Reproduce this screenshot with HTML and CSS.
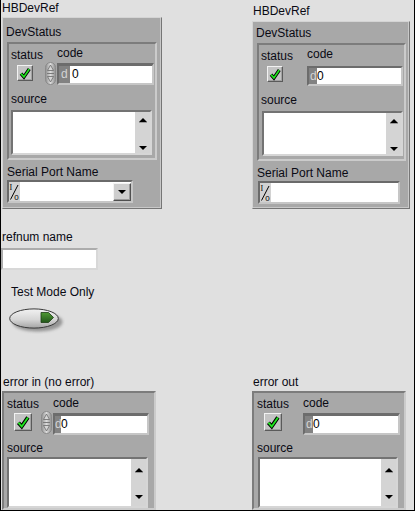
FILE: index.html
```html
<!DOCTYPE html>
<html>
<head>
<meta charset="utf-8">
<title>HBDevRef</title>
<link rel="stylesheet" href="styles.css">
</head>
<body>
<div class="panel">

  <section class="hb hb-l">
    <div class="lbl hb-lbl">HBDevRef</div>
    <div class="outer">
      <div class="lbl ds-lbl">DevStatus</div>
      <div class="errc">
        <div class="err-grid">
          <div class="lbl st-lbl">status</div>
          <div class="lbl code-lbl">code</div>
          <div class="chk chk-s"><svg viewBox="0 0 14 14"><path d="M3 7.6 L5.9 10.9 L11.3 3" fill="none" stroke="#000" stroke-width="3.4"/><path d="M3 7.6 L5.9 10.9 L11.3 3" fill="none" stroke="#1fe61f" stroke-width="1.6"/></svg></div>
          <div class="spin"><svg width="11" height="23" viewBox="0 0 11 23"><defs><linearGradient id="sg1" x1="0" x2="1" y1="0" y2="0"><stop offset="0" stop-color="#8e8e8e"/><stop offset="0.5" stop-color="#dcdcdc"/><stop offset="1" stop-color="#8e8e8e"/></linearGradient></defs><rect x="0.5" y="0.5" width="10" height="22" rx="5" fill="url(#sg1)" stroke="#8a8a8a"/><path d="M5.5 3 L8.5 8.5 L2.5 8.5 Z" fill="#d6d6d6" stroke="#6a6a6a" stroke-width="0.8"/><path d="M2.5 14.5 L8.5 14.5 L5.5 20 Z" fill="#d6d6d6" stroke="#6a6a6a" stroke-width="0.8"/><line x1="2" y1="11.5" x2="9" y2="11.5" stroke="#7a7a7a"/></svg></div>
          <div class="num num-a"><span class="radix">d</span><span class="val">0</span></div>
        </div>
        <div class="lbl src-lbl">source</div>
        <div class="str"><div class="str-txt"></div><div class="sb"><i class="ar-up"></i><i class="ar-dn"></i></div></div>
      </div>
      <div class="lbl sp-lbl">Serial Port Name</div>
      <div class="visa">
        <div class="io"><svg width="11" height="19" viewBox="0 0 11 19"><text x="0.5" y="7.5" font-size="8" font-family="Liberation Serif, serif">I</text><line x1="1.5" y1="17.5" x2="9" y2="3" stroke="#000" stroke-width="1"/><text x="5.2" y="18" font-size="8" font-family="Liberation Sans, sans-serif">0</text></svg></div>
        <div class="visa-field"></div>
        <div class="ddbtn"><i class="ar-dd"></i></div>
      </div>
    </div>
  </section>

  <section class="hb hb-r">
    <div class="lbl hb-lbl">HBDevRef</div>
    <div class="outer">
      <div class="lbl ds-lbl">DevStatus</div>
      <div class="errc">
        <div class="err-grid">
          <div class="lbl st-lbl">status</div>
          <div class="lbl code-lbl">code</div>
          <div class="chk chk-s"><svg viewBox="0 0 14 14"><path d="M3 7.6 L5.9 10.9 L11.3 3" fill="none" stroke="#000" stroke-width="3.4"/><path d="M3 7.6 L5.9 10.9 L11.3 3" fill="none" stroke="#1fe61f" stroke-width="1.6"/></svg></div>
          <div class="num num-b"><span class="radix">d</span><span class="val">0</span></div>
        </div>
        <div class="lbl src-lbl">source</div>
        <div class="str"><div class="str-txt"></div><div class="sb"><i class="ar-up"></i><i class="ar-dn"></i></div></div>
      </div>
      <div class="lbl sp-lbl">Serial Port Name</div>
      <div class="visa">
        <div class="io"><svg width="11" height="19" viewBox="0 0 11 19"><text x="0.5" y="7.5" font-size="8" font-family="Liberation Serif, serif">I</text><line x1="1.5" y1="17.5" x2="9" y2="3" stroke="#000" stroke-width="1"/><text x="5.2" y="18" font-size="8" font-family="Liberation Sans, sans-serif">0</text></svg></div>
        <div class="visa-field"></div>
      </div>
    </div>
  </section>

  <section class="mid">
    <div class="lbl ref-lbl">refnum name</div>
    <div class="refbox"></div>
    <div class="lbl tm-lbl">Test Mode Only</div>
    <div class="tmbtn"><svg width="56" height="27" viewBox="0 0 56 27"><defs><filter id="blur" x="-20%" y="-40%" width="140%" height="180%"><feGaussianBlur stdDeviation="1.4"/></filter><linearGradient id="bg" x1="0" x2="0" y1="0" y2="1"><stop offset="0" stop-color="#f2f2f2"/><stop offset="0.55" stop-color="#d6d6d6"/><stop offset="1" stop-color="#a4a4a4"/></linearGradient><linearGradient id="lg" x1="0" x2="0" y1="0" y2="1"><stop offset="0" stop-color="#4f9a33"/><stop offset="1" stop-color="#22561a"/></linearGradient></defs><ellipse cx="28.5" cy="15" rx="25" ry="9.5" fill="#7c7c7c" opacity="0.75" filter="url(#blur)"/><ellipse cx="25" cy="11.5" rx="24.3" ry="9.6" fill="url(#bg)" stroke="#3a3a3a" stroke-width="1"/><path d="M32 5.5 L39.5 5.5 L44.5 10.5 L39.5 15.5 L32 15.5 Z" fill="url(#lg)" stroke="#1d3d14" stroke-width="0.8"/></svg></div>
  </section>

  <section class="ec ei">
    <div class="lbl ec-lbl">error in (no error)</div>
    <div class="errc">
      <div class="err-grid">
        <div class="lbl st-lbl">status</div>
        <div class="lbl code-lbl">code</div>
        <div class="chk chk-l"><svg viewBox="0 0 14 14"><path d="M3 7.6 L5.9 10.9 L11.3 3" fill="none" stroke="#000" stroke-width="3.4"/><path d="M3 7.6 L5.9 10.9 L11.3 3" fill="none" stroke="#1fe61f" stroke-width="1.6"/></svg></div>
        <div class="spin"><svg width="11" height="23" viewBox="0 0 11 23"><defs><linearGradient id="sg2" x1="0" x2="1" y1="0" y2="0"><stop offset="0" stop-color="#8e8e8e"/><stop offset="0.5" stop-color="#dcdcdc"/><stop offset="1" stop-color="#8e8e8e"/></linearGradient></defs><rect x="0.5" y="0.5" width="10" height="22" rx="5" fill="url(#sg2)" stroke="#8a8a8a"/><path d="M5.5 3 L8.5 8.5 L2.5 8.5 Z" fill="#d6d6d6" stroke="#6a6a6a" stroke-width="0.8"/><path d="M2.5 14.5 L8.5 14.5 L5.5 20 Z" fill="#d6d6d6" stroke="#6a6a6a" stroke-width="0.8"/><line x1="2" y1="11.5" x2="9" y2="11.5" stroke="#7a7a7a"/></svg></div>
        <div class="num num-c"><span class="radix">d</span><span class="val">0</span></div>
      </div>
      <div class="lbl src-lbl">source</div>
      <div class="str"><div class="str-txt"></div><div class="sb"><i class="ar-up"></i><i class="ar-dn"></i></div></div>
    </div>
  </section>

  <section class="ec eo">
    <div class="lbl ec-lbl">error out</div>
    <div class="errc">
      <div class="err-grid">
        <div class="lbl st-lbl">status</div>
        <div class="lbl code-lbl">code</div>
        <div class="chk chk-l"><svg viewBox="0 0 14 14"><path d="M3 7.6 L5.9 10.9 L11.3 3" fill="none" stroke="#000" stroke-width="3.4"/><path d="M3 7.6 L5.9 10.9 L11.3 3" fill="none" stroke="#1fe61f" stroke-width="1.6"/></svg></div>
        <div class="num num-d"><span class="radix">d</span><span class="val">0</span></div>
      </div>
      <div class="lbl src-lbl">source</div>
      <div class="str"><div class="str-txt"></div><div class="sb"><i class="ar-up"></i><i class="ar-dn"></i></div></div>
    </div>
  </section>

</div>
</body>
</html>
```

FILE: styles.css
```css
* { box-sizing: border-box; }
html, body { margin: 0; padding: 0; }
body {
  width: 415px;
  height: 511px;
  overflow: hidden;
  background: #e0e0e0;
  border-left: 1px solid #000;
  border-right: 1px solid #000;
  border-bottom: 1px solid #000;
  font: 12px/14px "Liberation Sans", Arial, sans-serif;
  color: #0a0a14;
}
.panel {
  display: grid;
  grid-template-columns: 250px 162px;
  padding-left: 1px;
  align-items: start;
}
.lbl { white-space: nowrap; height: 14px; }

.hb-l { grid-column: 1; grid-row: 1; }
.hb-r { grid-column: 2; grid-row: 1; }
.mid  { grid-column: 1; grid-row: 2; }
.ei   { grid-column: 1; grid-row: 3; }
.eo   { grid-column: 2; grid-row: 3; }

.hb-l .hb-lbl { margin: 1px 0 2px 0; }
.hb-r .hb-lbl { margin: 4px 0 3px 1px; }

.outer {
  background: #a8a8a8;
  border: 1px solid;
  border-color: #d4d4d4 #767676 #767676 #d4d4d4;
  box-shadow: inset -1px -1px 0 #c8c8c8;
  padding: 7px 3px 5px 4px;
}
.hb-l .outer { width: 160px; }
.hb-r .outer { width: 158px; padding-top: 4px; padding-bottom: 4px; }
.ds-lbl { margin: 0 0 3px -1px; }
.sp-lbl { margin-top: 5px; }

.errc {
  background: #a8a8a8;
  border: 2px solid;
  border-color: #7c7c7c #cbcbcb #cbcbcb #7c7c7c;
  padding: 4px 0 3px 2px;
}
.hb-l .errc { width: 150px; }
.hb-r .errc { width: 149px; }

.err-grid {
  display: grid;
  grid-template-columns: 34px 12px auto;
  grid-template-rows: 14px auto;
  align-items: start;
}
.st-lbl { grid-column: 1; grid-row: 1; }
.code-lbl { grid-column: 3; grid-row: 1; margin-top: -2px; }
.chk { grid-column: 1; grid-row: 2; }
.spin { grid-column: 2; grid-row: 2; height: 23px; }
.spin svg { display: block; }
.num { grid-column: 3; grid-row: 2; }

.chk {
  background: #c4c4c4;
  border: 1px solid;
  border-color: #f2f2f2 #5a5a5a #5a5a5a #f2f2f2;
  box-shadow: inset -1px -1px 0 #a2a2a2;
}
.chk svg { display: block; width: 100%; height: 100%; }
.chk-s { width: 16px; height: 16px; margin: 3px 0 0 6px; }
.chk-l { width: 18px; height: 18px; margin: 2px 0 0 7px; }

.num {
  display: flex;
  border-style: solid;
  border-width: 3px 2px 2px 2px;
  border-color: #6c6c6c #c6c6c6 #c6c6c6 #6c6c6c;
  background: #fff;
  overflow: hidden;
}
.radix {
  background: #828282;
  color: #d4d4d4;
  overflow: hidden;
  flex: none;
  line-height: 16px;
}
.val { color: #000; line-height: 16px; }
.num-a { width: 97px; height: 22px; margin-top: 1px; }
.num-a .radix { width: 11px; padding-left: 2px; }
.num-a .val { padding-left: 2px; }
.num-b { width: 96px; height: 20px; margin-top: 3px; border-top-width: 2px; }
.num-b .radix { width: 8px; padding-left: 1px; }
.num-c { width: 96px; height: 22px; margin-top: 2px; }
.num-c .radix { width: 6px; padding-left: 0; }
.num-d { width: 97px; height: 22px; margin-top: 2px; }
.num-d .radix { width: 8px; padding-left: 1px; }
.num-b .val, .num-c .val, .num-d .val { padding-left: 0; }

.src-lbl { margin-top: 7px; }
.str {
  display: flex;
  margin-top: 4px;
  width: 141px;
  height: 45px;
  background: #fff;
  border: 2px solid;
  border-color: #737373 #d6d6d6 #d6d6d6 #737373;
}
.str-txt { flex: 1; }
.sb {
  width: 16px;
  background: #d4d4d4;
  border-left: 1px solid #fff;
  display: flex;
  flex-direction: column;
  align-items: center;
  justify-content: space-between;
  padding: 6px 0 3px 0;
}
.ar-up, .ar-dn {
  display: block;
  width: 0;
  height: 0;
  border-left: 4px solid transparent;
  border-right: 4px solid transparent;
}
.ar-up { border-bottom: 4px solid #000; box-shadow: 0 1px 0 #9a9a9a; }
.ar-dn { border-top: 4px solid #000; }

.hb-r .str { margin-left: 1px; }

.visa {
  display: flex;
  margin-top: 1px;
  height: 23px;
  background: #fff;
  border: 2px solid;
  border-color: #6a6a6a #c6c6c6 #c6c6c6 #6a6a6a;
}
.hb-l .visa { width: 126px; }
.hb-r .visa { width: 142px; margin-left: 1px; }
.io { width: 11px; background: #d2d2d2; flex: none; }
.io svg { display: block; }
.visa-field { flex: 1; }
.ddbtn {
  flex: none;
  width: 18px;
  height: 18px;
  margin-top: 1px;
  background: #cecece;
  border: 1px solid;
  border-color: #f4f4f4 #505050 #505050 #f4f4f4;
  box-shadow: inset -1px -1px 0 #9a9a9a;
  display: flex;
  align-items: center;
  justify-content: center;
}
.ar-dd {
  display: block;
  width: 0;
  height: 0;
  border-left: 4px solid transparent;
  border-right: 4px solid transparent;
  border-top: 4px solid #000;
}

.ref-lbl { margin-top: 21px; }
.refbox {
  margin: 4px 0 0 -1px;
  width: 97px;
  height: 22px;
  background: #fff;
  border: 2px solid;
  border-color: #acacac #d8d8d8 #d8d8d8 #acacac;
}
.tm-lbl { margin: 15px 0 0 9px; }
.tmbtn { margin: 8px 0 0 7px; height: 26px; }
.tmbtn svg { display: block; }

.ec-lbl { margin-top: 42px; margin-bottom: 2px; }
.ei .ec-lbl { margin-left: 1px; }
.eo .ec-lbl { margin-left: 1px; }
.ec .errc { width: 154px; padding-left: 3px; padding-bottom: 0; }
.ec .code-lbl { margin-top: -1px; }
.ec .src-lbl { margin-top: 6px; }
.ec .str { margin-top: 2px; height: 51px; }
.ec .sb { padding-top: 9px; padding-bottom: 7px; }
.ei .str { width: 141px; }
.eo .str { width: 140px; margin-left: 1px; }
```
